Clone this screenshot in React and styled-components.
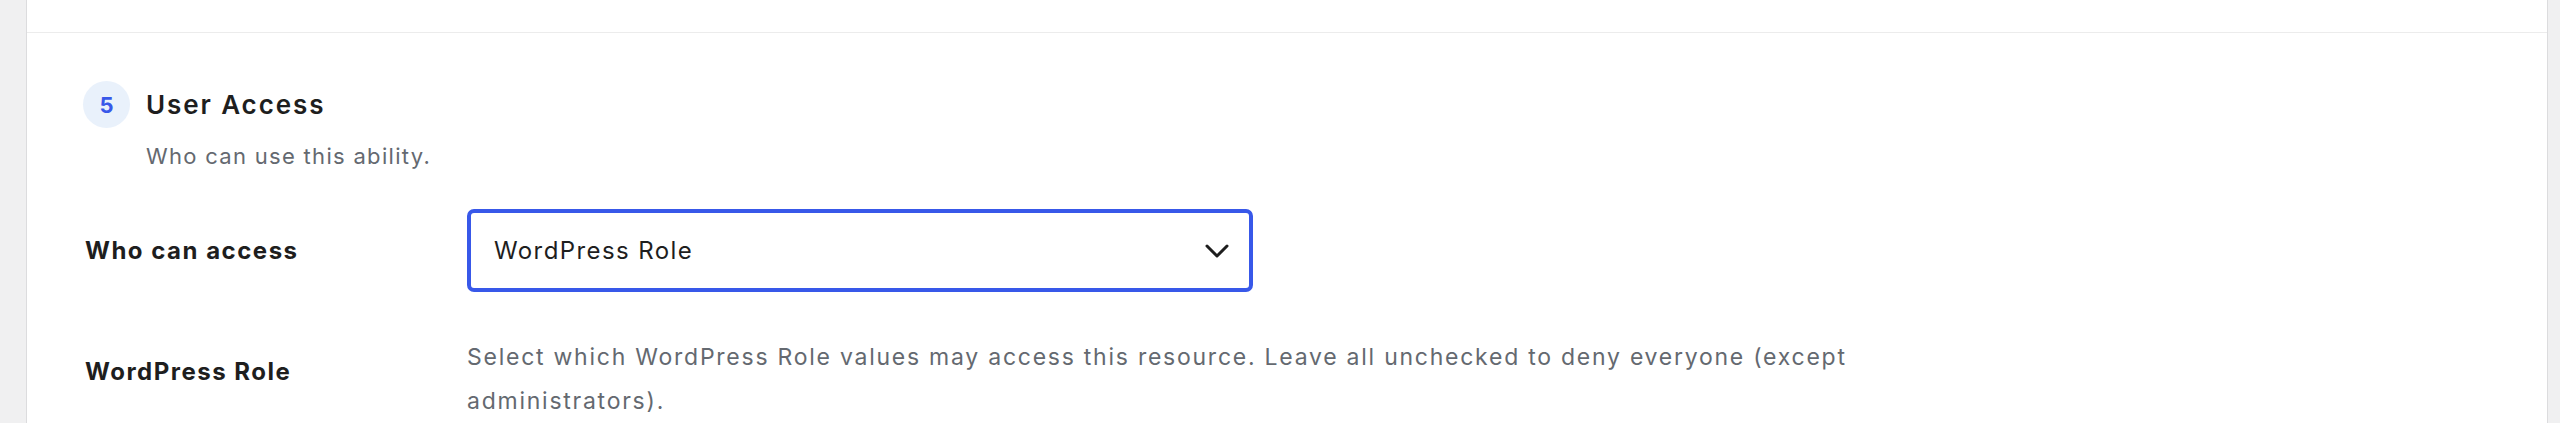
import React from 'react';
import styled, { createGlobalStyle } from 'styled-components';

const GlobalStyle = createGlobalStyle`
    html, body {
        margin:0;
        padding:0;
        background:#f0f0f1;
    }
    body {
        font-family: Inter, "Noto Sans", "Liberation Sans", sans-serif;
        color:#1e1e1e;
    }
`;

const Card = styled.div`
    margin:0 12px 0 26px;
    background:#fff;
    border-left:1px solid #dcdcde;
    border-right:1px solid #dcdcde;
`;

const PrevSection = styled.div`
    height:32px;
    border-bottom:1px solid #ececec;
`;

const Section = styled.section`
    padding:48px 56px 60px 56px;
`;

const Header = styled.div`
    display:flex;
    align-items:center;
    gap:16px;
`;

const StepBadge = styled.span`
    width:47px;
    height:47px;
    border-radius:50%;
    background:#e9f1fb;
    color:#3858e9;
    font-size:22px;
    font-weight:700;
    display:flex;
    align-items:center;
    justify-content:center;
    flex-shrink:0;
`;

const Title = styled.h2`
    margin:0;
    font-size:26px;
    font-weight:600;
    letter-spacing:1.9px;
    color:#1e1e1e;
    line-height:1.2;
`;

const Subtitle = styled.p`
    margin:12px 0 0 63px;
    font-size:22px;
    line-height:33px;
    letter-spacing:1.3px;
    color:#646970;
`;

const Fields = styled.div`
    margin-top:36px;
    display:flex;
    flex-direction:column;
    gap:43px;
`;

const Row = styled.div`
    display:grid;
    grid-template-columns:384px 1fr;
    align-items:${(p) => p.$align || 'center'};
`;

const Label = styled.label`
    font-size:24px;
    line-height:36px;
    font-weight:700;
    letter-spacing:1.5px;
    color:#1e1e1e;
    padding-left:2px;
    padding-top:${(p) => p.$offset || 0}px;
`;

const Select = styled.div`
    box-sizing:border-box;
    width:786px;
    height:83px;
    border:4px solid #3858e9;
    border-radius:7px;
    padding:0 20px 0 23px;
    display:flex;
    align-items:center;
    justify-content:space-between;
    font-size:24px;
    letter-spacing:1.4px;
    color:#1e1e1e;
`;

const Description = styled.p`
    margin:0;
    max-width:1420px;
    font-size:23px;
    line-height:44px;
    letter-spacing:1.75px;
    color:#646970;
`;

const Chevron = () => (
  <svg width="24" height="14" viewBox="0 0 24 14" fill="none">
    <polyline points="2,2 12,12 22,2" stroke="#1e1e1e" strokeWidth="3" strokeLinecap="round" strokeLinejoin="round" />
  </svg>
);

const App = () => (
  <>
    <GlobalStyle />
    <Card>
      <PrevSection />
      <Section>
        <Header>
          <StepBadge>5</StepBadge>
          <Title>User Access</Title>
        </Header>
        <Subtitle>Who can use this ability.</Subtitle>
        <Fields>
          <Row>
            <Label>Who can access</Label>
            <Select>
              <span>WordPress Role</span>
              <Chevron />
            </Select>
          </Row>
          <Row $align="start">
            <Label $offset={19}>WordPress Role</Label>
            <Description>
              Select which WordPress Role values may access this resource. Leave all unchecked to deny everyone (except administrators).
            </Description>
          </Row>
        </Fields>
      </Section>
    </Card>
  </>
);

export default App;
